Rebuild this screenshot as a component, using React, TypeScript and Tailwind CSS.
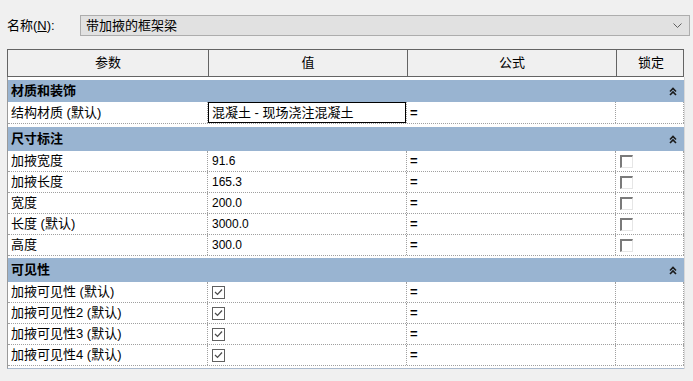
import React from "react";

type Row = {
  label: string;
  value?: string;
  edit?: boolean;
  check?: boolean;
  lock?: boolean;
};

type Group = { title: string; gap: string; height: string; rows: Row[] };

const groups: Group[] = [
  {
    title: "材质和装饰",
    gap: "mt-[3px]",
    height: "h-[22px]",
    rows: [{ label: "结构材质 (默认)", value: "混凝土 - 现场浇注混凝土", edit: true }],
  },
  {
    title: "尺寸标注",
    gap: "mt-[3px]",
    height: "h-[24px]",
    rows: [
      { label: "加掖宽度", value: "91.6", lock: true },
      { label: "加掖长度", value: "165.3", lock: true },
      { label: "宽度", value: "200.0", lock: true },
      { label: "长度 (默认)", value: "3000.0", lock: true },
      { label: "高度", value: "300.0", lock: true },
    ],
  },
  {
    title: "可见性",
    gap: "mt-[2px]",
    height: "h-[24px]",
    rows: [
      { label: "加掖可见性 (默认)", check: true },
      { label: "加掖可见性2 (默认)", check: true },
      { label: "加掖可见性3 (默认)", check: true },
      { label: "加掖可见性4 (默认)", check: true },
    ],
  },
];

const CollapseIcon = () => (
  <svg width="8" height="9" viewBox="0 0 8 9" fill="none">
    <path d="M1 4.5 L4 1.5 L7 4.5" stroke="#1a1a1a" strokeWidth="1.6" />
    <path d="M1 8 L4 5 L7 8" stroke="#1a1a1a" strokeWidth="1.6" />
  </svg>
);

const LockBox = () => (
  <div className="w-[13px] h-[13px] bg-white border-t-2 border-l-2 border-r border-b border-t-[#7a7a7a] border-l-[#7a7a7a] border-r-[#e6e6e6] border-b-[#e6e6e6]" />
);

const CheckBox = () => (
  <div className="w-[13px] h-[13px] bg-white border border-[#5f5f5f] flex items-center justify-center">
    <svg width="9" height="8" viewBox="0 0 9 8" fill="none">
      <path d="M1 4 L3.5 6.5 L8 1.5" stroke="#4a4a4a" strokeWidth="1.2" />
    </svg>
  </div>
);

const cell = "border-r border-dotted border-[#a0a0a0] flex items-center";

const App = () => {
  return (
    <div className="w-[693px] h-[381px] bg-[#f0f0f0] overflow-hidden text-black font-['Liberation_Sans','Noto_Sans_CJK_SC',sans-serif] text-[13px]">
      {/* name row */}
      <div className="flex items-center pt-[15px]">
        <div className="w-[80px] pl-[7px] leading-none">
          名称(<span className="underline">N</span>):
        </div>
        <div className="w-[610px] h-[21px] bg-[#e1e1e1] border border-[#adadad] flex items-center justify-between pl-[5px] pr-[7px]">
          <span>带加掖的框架梁</span>
          <svg width="9" height="5" viewBox="0 0 9 5" fill="none">
            <path d="M0.5 0.5 L4.5 4.5 L8.5 0.5" stroke="#606060" strokeWidth="1" />
          </svg>
        </div>
      </div>

      {/* table */}
      <div className="ml-[7px] mt-[13px] w-[678px]">
        <div className="w-[677px] h-[28px] grid grid-cols-[201px_199px_209px_68px] border border-[#646464] bg-[#f0f0f0]">
          <div className="border-r border-[#646464] flex items-center justify-center">参数</div>
          <div className="border-r border-[#646464] flex items-center justify-center">值</div>
          <div className="border-r border-[#646464] flex items-center justify-center">公式</div>
          <div className="flex items-center justify-center">锁定</div>
        </div>

        <div className="flex">
          <div className="w-[677px] bg-white border-l border-[#9a9a9a] pb-[2px] border-b border-b-[#a9b9cd]">
            {groups.map((g) => (
              <div key={g.title}>
                <div
                  className={`${g.gap} ${g.height} bg-[#99b4d1] flex items-center justify-between pl-[3px] pr-[7px] font-bold`}
                >
                  <span>{g.title}</span>
                  <CollapseIcon />
                </div>
                {g.rows.map((r) => (
                  <div
                    key={r.label}
                    className={`grid grid-cols-[200px_199px_209px_68px] ${
                      r.edit ? "h-[22px]" : "h-[21px]"
                    } border-b border-dotted border-[#a0a0a0]`}
                  >
                    <div className={`${cell} pl-[3px]`}>{r.label}</div>
                    <div className={`${cell} relative`}>
                      {r.edit ? (
                        <div className="absolute inset-0 border border-black flex items-center pl-[3px] bg-white">
                          {r.value}
                        </div>
                      ) : r.check ? (
                        <div className="pl-[4px]">
                          <CheckBox />
                        </div>
                      ) : (
                        <span className="pl-[4px] text-[12px]">{r.value}</span>
                      )}
                    </div>
                    <div className={`${cell} pl-[3px] font-bold`}>=</div>
                    <div className={`${cell} pl-[4px]`}>{r.lock ? <LockBox /> : null}</div>
                  </div>
                ))}
              </div>
            ))}
          </div>
          <div className="w-[2px] bg-[#d8d8d8]" />
        </div>
      </div>
    </div>
  );
};

export default App;
